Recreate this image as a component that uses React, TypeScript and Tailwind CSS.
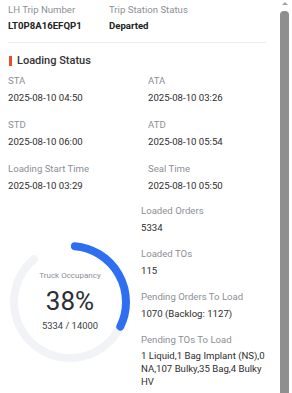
import React from "react";

const font = { fontFamily: "Roboto, 'Noto Sans', Arial, sans-serif" };

function Item({ label, value, wrap }: { label: string; value: React.ReactNode; wrap?: boolean }) {
  return (
    <div>
      <div className="text-[9.6px] leading-[16px] text-[#8c8f96]">{label}</div>
      <div className={`mt-px text-[9.6px] text-[#2e2e2e] ${wrap ? "leading-[13px] whitespace-nowrap" : "leading-[16px]"}`}>{value}</div>
    </div>
  );
}

function Gauge() {
  const cx = 62, cy = 62, r = 56;
  const pt = (deg: number) => {
    const a = (deg * Math.PI) / 180;
    return [cx + r * Math.sin(a), cy - r * Math.cos(a)];
  };
  const arc = (a0: number, a1: number) => {
    const [x0, y0] = pt(a0);
    const [x1, y1] = pt(a1);
    const large = a1 - a0 > 180 ? 1 : 0;
    return `M ${x0} ${y0} A ${r} ${r} 0 ${large} 1 ${x1} ${y1}`;
  };
  return (
    <div className="relative w-[124px] h-[124px]">
      <svg width="124" height="124" viewBox="0 0 124 124">
        <path d={arc(116, 320)} fill="none" stroke="#f2f3f7" strokeWidth="8" strokeLinecap="round" />
        <path d={arc(5, 116)} fill="none" stroke="#2e6ff2" strokeWidth="8" strokeLinecap="round" />
      </svg>
      <div className="absolute left-0 top-[29px] w-full text-center text-[8px] leading-[14px] text-[#8a8e98]">Truck Occupancy</div>
      <div className="absolute left-0 top-[45px] w-full text-center text-[26px] leading-[32px] text-[#2a2e37]">38%</div>
      <div className="absolute left-0 top-[79px] w-full text-center text-[9.4px] leading-[14px] text-[#3a3d44]">5334 / 14000</div>
    </div>
  );
}

export default function App() {
  return (
    <div className="flex h-[393px] w-[292px] overflow-hidden bg-white" style={font}>
      <div className="flex-1 pl-2 pr-[13px] pt-[2px]">
        <div className="flex">
          <div className="w-[101px]">
            <div className="text-[9.6px] leading-[16px] text-[#8c8f96]">LH Trip Number</div>
            <div className="text-[9.6px] leading-[16px] font-bold text-[#222]">LT0P8A16EFQP1</div>
          </div>
          <div>
            <div className="text-[9.6px] leading-[16px] text-[#8c8f96]">Trip Station Status</div>
            <div className="text-[9.6px] leading-[16px] font-bold text-[#222]">Departed</div>
          </div>
        </div>
        <div className="mt-[8px] border-t border-[#ececec]" />
        <div className="mt-[10px] flex items-center gap-[5px]">
          <div className="ml-px h-[10px] w-[3px] bg-[#ee4d2d]" />
          <div className="text-[11px] leading-[16px] font-medium text-[#333]">Loading Status</div>
        </div>
        <div className="mt-[4px] grid grid-cols-[140px_1fr] gap-y-[11px]">
          <Item label="STA" value="2025-08-10 04:50" />
          <Item label="ATA" value="2025-08-10 03:26" />
          <Item label="STD" value="2025-08-10 06:00" />
          <Item label="ATD" value="2025-08-10 05:54" />
          <Item label="Loading Start Time" value="2025-08-10 03:29" />
          <Item label="Seal Time" value="2025-08-10 05:50" />
        </div>
        <div className="mt-[9px] flex gap-[9px]">
          <div className="pt-[37px]">
            <Gauge />
          </div>
          <div className="w-[120px] flex flex-col gap-y-[10px]">
            <Item label="Loaded Orders" value="5334" />
            <Item label="Loaded TOs" value="115" />
            <Item label="Pending Orders To Load" value="1070 (Backlog: 1127)" />
            <Item
              label="Pending TOs To Load"
              value={
                <>
                  1 Liquid,1 Bag Implant (NS),0
                  <br />
                  NA,107 Bulky,35 Bag,4 Bulky
                  <br />
                  HV
                </>
              }
              wrap
            />
          </div>
        </div>
      </div>
      <div className="w-[13px] flex flex-col items-start">
        <div className="ml-[3px] mt-[2px] h-0 w-0 border-x-[3.5px] border-b-[3.5px] border-x-transparent border-b-[#a3a3a3]" />
        <div className="ml-px mt-[6px] w-[9px] flex-1 rounded-t-[4px] bg-[#8f8f8f]" />
      </div>
    </div>
  );
}
